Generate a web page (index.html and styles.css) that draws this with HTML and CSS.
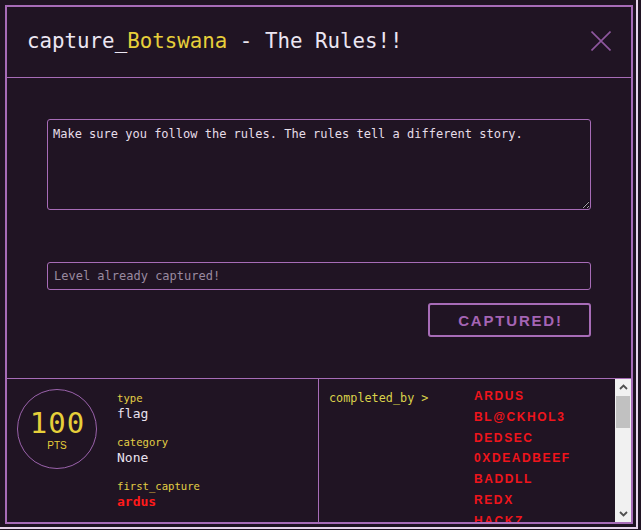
FILE: index.html
```html
<!DOCTYPE html>
<html lang="en">
<head>
<meta charset="utf-8">
<title>capture_Botswana - The Rules!!</title>
<link rel="stylesheet" href="styles.css">
</head>
<body>
<div class="frame">
  <div class="modal">
    <header class="modal-header">
      <h1 class="title">capture_<span class="hl">Botswana</span> - The Rules!!</h1>
      <button class="close" aria-label="Close">
        <svg width="20" height="20" viewBox="0 0 20 20"><path d="M0.5 0.5 L19.5 19.5 M19.5 0.5 L0.5 19.5" stroke="#8e579e" stroke-width="1.6" fill="none"/></svg>
      </button>
    </header>
    <section class="modal-body">
      <textarea class="desc" readonly>Make sure you follow the rules. The rules tell a different story.</textarea>
      <input class="flag-input" type="text" placeholder="Level already captured!" disabled>
      <div class="actions">
        <button class="capture-btn">CAPTURED!</button>
      </div>
    </section>
    <footer class="modal-footer">
      <div class="stats">
        <div class="points">
          <div class="pts-num">100</div>
          <div class="pts-label">PTS</div>
        </div>
        <div class="info">
          <div class="label">type</div>
          <div class="value">flag</div>
          <div class="label">category</div>
          <div class="value">None</div>
          <div class="label">first_capture</div>
          <div class="value red">ardus</div>
        </div>
      </div>
      <div class="completed">
        <div class="completed-content">
          <div class="completed-label">completed_by &gt;</div>
          <ul class="names">
            <li>ARDUS</li>
            <li>BL@CKHOL3</li>
            <li>DEDSEC</li>
            <li>0XDEADBEEF</li>
            <li>BADDLL</li>
            <li>REDX</li>
            <li>HACKZ</li>
          </ul>
        </div>
        <div class="scrollbar" aria-hidden="true">
          <div class="sb-btn">
            <svg width="9" height="6" viewBox="0 0 9 6"><path d="M1 5 L4.5 1.5 L8 5" stroke="#505050" stroke-width="1.8" fill="none"/></svg>
          </div>
          <div class="sb-track"><div class="sb-thumb"></div></div>
          <div class="sb-btn">
            <svg width="9" height="6" viewBox="0 0 9 6"><path d="M1 1 L4.5 4.5 L8 1" stroke="#505050" stroke-width="1.8" fill="none"/></svg>
          </div>
        </div>
      </div>
    </footer>
  </div>
</div>
</body>
</html>
```
FILE: styles.css
```css
html, body {
  margin: 0;
  padding: 0;
  background: #201423;
  width: 641px;
  height: 530px;
  overflow: hidden;
}

.frame {
  box-sizing: border-box;
  width: 638px;
  height: 529px;
  padding: 5px 3px 3px 5px;
  border-right: 2px solid #e8d6ec;
  border-bottom: 2px solid #e8d6ec;
}

.modal {
  box-sizing: border-box;
  width: 628px;
  height: 519px;
  border: 2px solid #a76cb7;
  display: flex;
  flex-direction: column;
  font-family: "DejaVu Sans Mono", "Liberation Mono", monospace;
  color: #e9e2ee;
}

.modal-header {
  box-sizing: border-box;
  height: 71px;
  flex: none;
  display: flex;
  align-items: center;
  justify-content: space-between;
  padding: 0 20px 2px 20px;
  border-bottom: 1px solid #a76cb7;
}

.title {
  margin: 0;
  font-size: 20.8px;
  font-weight: normal;
  color: #ece6f2;
}

.hl { color: #e6cf3a; }

.close {
  background: none;
  border: none;
  padding: 0;
  width: 20px;
  height: 20px;
  display: block;
}
.close svg { display: block; }

.modal-body {
  box-sizing: border-box;
  height: 300px;
  flex: none;
  padding: 41px 40px 0 40px;
  display: flex;
  flex-direction: column;
}

.desc {
  box-sizing: border-box;
  display: block;
  width: 544px;
  height: 91px;
  margin: 0;
  padding: 7px 5px;
  background: #201423;
  border: 1px solid #a76cb7;
  border-radius: 3px;
  color: #e6dde8;
  font-family: "DejaVu Sans Mono", "Liberation Mono", monospace;
  font-size: 12px;
  line-height: 15px;
  color-scheme: dark;
  outline: none;
}

.flag-input {
  box-sizing: border-box;
  display: block;
  width: 544px;
  height: 28px;
  margin: 52px 0 0 0;
  padding: 0 6px;
  background: #201423;
  border: 1px solid #a76cb7;
  border-radius: 3px;
  font-family: "DejaVu Sans Mono", "Liberation Mono", monospace;
  font-size: 12px;
}
.flag-input::placeholder { color: #9a8aa0; opacity: 1; }

.actions {
  display: flex;
  justify-content: flex-end;
  margin-top: 13px;
}

.capture-btn {
  box-sizing: border-box;
  width: 163px;
  height: 34px;
  background: transparent;
  border: 2px solid #a76cb7;
  border-radius: 3px;
  color: #a464b4;
  font-family: "Liberation Sans", Arial, sans-serif;
  font-weight: bold;
  font-size: 15px;
  letter-spacing: 1.8px;
  padding: 0 0 0 2px;
}

.modal-footer {
  flex: 1;
  min-height: 0;
  overflow: hidden;
  border-top: 1px solid #a76cb7;
  display: grid;
  grid-template-columns: 312px minmax(0, 1fr);
  grid-template-rows: minmax(0, 1fr);
}

.stats {
  border-right: 1px solid #a76cb7;
  display: flex;
  align-items: flex-start;
  padding: 10px 0 0 10px;
  gap: 20px;
}

.points {
  box-sizing: border-box;
  width: 80px;
  height: 80px;
  border: 1px solid #9a62ab;
  border-radius: 50%;
  display: flex;
  flex-direction: column;
  align-items: center;
  justify-content: center;
  color: #e6cf3a;
}

.pts-num {
  font-family: "DejaVu Sans Mono", monospace;
  font-size: 29px;
  line-height: 30px;
  letter-spacing: 1px;
  margin-top: 2px;
  margin-left: 1px;
}

.pts-label {
  font-family: "Liberation Sans", Arial, sans-serif;
  font-size: 10px;
  line-height: 12px;
  margin-top: 2px;
}

.info {
  padding-top: 2px;
  display: flex;
  flex-direction: column;
}

.label {
  font-size: 10.6px;
  line-height: 14px;
  color: #e3cf45;
}

.value {
  font-size: 13px;
  line-height: 18px;
  color: #e9e2ee;
  margin-bottom: 12px;
}

.value.red {
  color: #ff1a1a;
  font-weight: bold;
}

.completed {
  min-height: 0;
  display: flex;
  overflow: hidden;
}

.completed-content {
  flex: 1;
  min-width: 0;
  display: flex;
  align-items: flex-start;
  padding: 7px 0 0 10px;
  overflow: hidden;
}

.completed-label {
  width: 145px;
  flex: none;
  font-size: 11.8px;
  line-height: 24px;
  color: #d9d24a;
}

.names {
  list-style: none;
  margin: 0;
  padding: 0;
  font-family: "Liberation Sans", Arial, sans-serif;
  font-weight: bold;
  font-size: 12px;
  letter-spacing: 1.6px;
  line-height: 20.8px;
  color: #f0141c;
}

.scrollbar {
  width: 16px;
  flex: none;
  background: #f1f1f1;
  display: flex;
  flex-direction: column;
}

.sb-btn {
  height: 16px;
  flex: none;
  display: flex;
  align-items: center;
  justify-content: center;
}
.sb-btn svg { display: block; }

.sb-track {
  flex: 1;
  padding: 1px 1px 0 1px;
}

.sb-thumb {
  height: 32px;
  background: #c1c1c1;
}
```
